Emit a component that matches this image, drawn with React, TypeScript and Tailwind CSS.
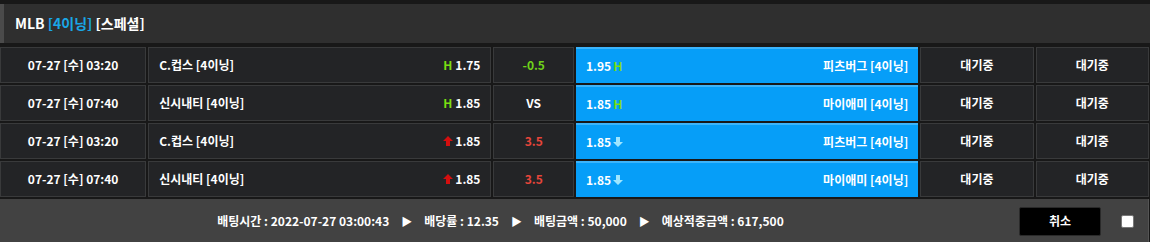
import React from "react";

type Row = {
  time: string;
  home: string;
  homeOdd: string;
  homeMark: "H" | "up";
  line: string;
  lineColor: string;
  awayOdd: string;
  awayMark: "H" | "down";
  away: string;
};

const rows: Row[] = [
  { time: "07-27 [수] 03:20", home: "C.컵스 [4이닝]", homeOdd: "1.75", homeMark: "H", line: "-0.5", lineColor: "text-[#6fd21a]", awayOdd: "1.95", awayMark: "H", away: "피츠버그 [4이닝]" },
  { time: "07-27 [수] 07:40", home: "신시내티 [4이닝]", homeOdd: "1.85", homeMark: "H", line: "VS", lineColor: "text-white", awayOdd: "1.85", awayMark: "H", away: "마이애미 [4이닝]" },
  { time: "07-27 [수] 03:20", home: "C.컵스 [4이닝]", homeOdd: "1.85", homeMark: "up", line: "3.5", lineColor: "text-[#e5453a]", awayOdd: "1.85", awayMark: "down", away: "피츠버그 [4이닝]" },
  { time: "07-27 [수] 07:40", home: "신시내티 [4이닝]", homeOdd: "1.85", homeMark: "up", line: "3.5", lineColor: "text-[#e5453a]", awayOdd: "1.85", awayMark: "down", away: "마이애미 [4이닝]" },
];

function UpArrow() {
  return (
    <svg width="10" height="10" viewBox="0 0 10 10" className="mr-[2px]">
      <path d="M5 0 L10 5 L7 5 L7 10 L3 10 L3 5 L0 5 Z" fill="#d40f0f" />
    </svg>
  );
}

function DownArrow() {
  return (
    <svg width="10" height="10" viewBox="0 0 10 10" className="ml-[2px]">
      <path d="M3 0 L7 0 L7 5 L10 5 L5 10 L0 5 L3 5 Z" fill="#9fe6ff" />
    </svg>
  );
}

// base cell, text colour set per cell
const cell = "h-[36px] bg-[#232426] border border-[#393a3b] flex items-center";

function Arrow() {
  return <span className="mx-[12px] text-[11px]">▶</span>;
}

export default function App() {
  return (
    <div
      className="w-[1150px] h-[242px] bg-[#181818] pt-[4px] overflow-hidden"
      style={{ fontFamily: '"Noto Sans CJK KR", "Noto Sans", sans-serif' }}
    >
      <div className="h-[39px] bg-[#2f2f2f] border-l-[4px] border-[#4b4b4b] flex items-center pl-[11px] text-[14px] font-bold text-white">
        MLB&nbsp;<span className="text-[#1aa7e6]">[4이닝]</span>&nbsp;[스페셜]
      </div>

      <div className="mt-[4px] flex flex-col gap-[2px] w-[1149px] text-[12px] font-semibold">
        {rows.map((r, i) => (
          <div key={i} className="flex gap-[1px]">
            <div className={`${cell} text-white w-[147px] justify-center`}>{r.time}</div>
            <div className={`${cell} text-white w-[345px] justify-between px-[10px] ml-[1px]`}>
              <span>{r.home}</span>
              <span className="flex items-center">
                {r.homeMark === "H" ? (
                  <span className="text-[#7bdc12] font-bold mr-[3px]">H</span>
                ) : (
                  <UpArrow />
                )}
                {r.homeOdd}
              </span>
            </div>
            <div className={`${cell} w-[81px] justify-center ml-[1px] ${r.lineColor}`}>
              {r.line}
            </div>
            <div className="h-[36px] w-[344px] ml-[1px] bg-[#069ef8] border-t-[2px] border-[#3cb4fb] flex items-center justify-between pl-[10px] pr-[10px] text-white">
              <span className="flex items-center">
                {r.awayOdd}
                {r.awayMark === "H" ? (
                  <span className="text-[#7bdc12] font-bold ml-[2px]">H</span>
                ) : (
                  <DownArrow />
                )}
              </span>
              <span>{r.away}</span>
            </div>
            <div className={`${cell} text-white w-[114px] justify-center ml-[1px]`}>대기중</div>
            <div className={`${cell} text-white w-[114px] justify-center ml-[1px]`}>대기중</div>
          </div>
        ))}
      </div>

      <div className="mt-[2px] h-[44px] w-[1149px] bg-[#424242] border-r border-[#555] flex items-center text-white text-[12px] font-semibold">
        <div className="flex-1 flex justify-center items-center pr-[18px]">
          <span>배팅시간 : 2022-07-27 03:00:43</span>
          <Arrow />
          <span>배당률 : 12.35</span>
          <Arrow />
          <span>배팅금액 : 50,000</span>
          <Arrow />
          <span>예상적중금액 : 617,500</span>
        </div>
        <div className="w-[82px] h-[29px] bg-black border border-[#2a2a2a] rounded-[2px] flex items-center justify-center">
          취소
        </div>
        <div className="ml-[20px] mr-[14px] w-[13px] h-[13px] bg-white border border-[#777] rounded-[2px]" />
      </div>
    </div>
  );
}
